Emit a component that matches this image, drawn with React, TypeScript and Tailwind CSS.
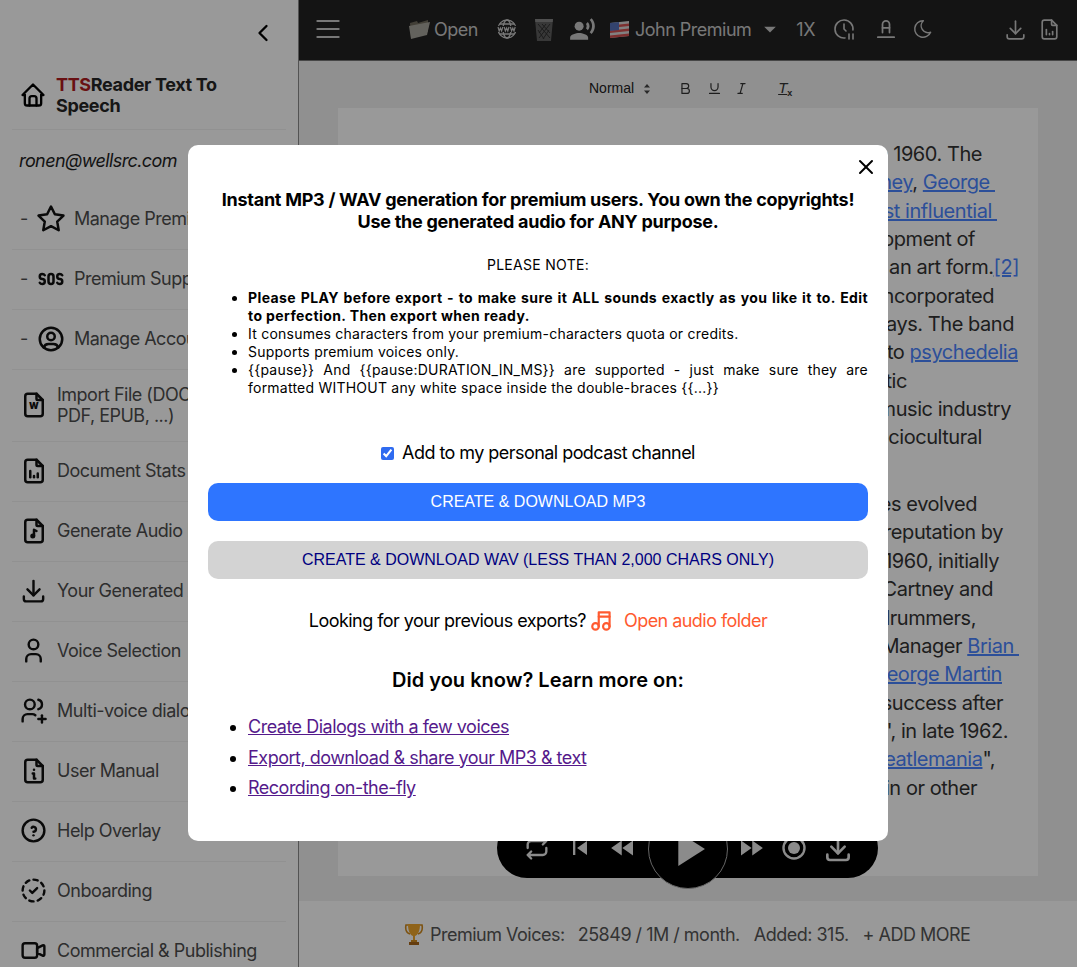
import type { ReactNode } from "react";
import {
  TbChevronLeft, TbHome, TbStar, TbSos, TbUserCircle, TbFileAnalytics, TbFileMusic, TbDownload, TbUser,
  TbUsersPlus, TbFileInfo, TbHelpCircle, TbCircleDashedCheck, TbVideo, TbFile, TbMenu2,
  TbClockPause, TbMoon, TbX, TbMusic, TbRepeat, TbTextColor, TbBold, TbUnderline, TbItalic,
} from "react-icons/tb";
import { MdRecordVoiceOver, MdArrowDropDown, MdSkipPrevious, MdFastRewind, MdFastForward, MdPlayArrow } from "react-icons/md";

const FileWord = () => (
  <span className="relative flex w-[26px] h-[30px] items-center justify-center">
    <TbFile size={30} className="shrink-0" />
    <span className="absolute top-[11px] left-[8px] text-[9px] leading-[10px] font-black tracking-normal">W</span>
  </span>
);

const NAV_ITEMS: { label: string; icon: ReactNode; tall?: boolean }[] = [
  { label: "Import File (DOCX, TXT, PDF, EPUB, ...)", icon: <FileWord />, tall: true },
  { label: "Document Stats", icon: <TbFileAnalytics size={30} className="-ml-[2px]" /> },
  { label: "Generate Audio MP3", icon: <TbFileMusic size={30} className="-ml-[2px]" /> },
  { label: "Your Generated Audio", icon: <TbDownload size={29} className="-ml-[2px]" /> },
  { label: "Voice Selection", icon: <TbUser size={29} className="-ml-[2px]" /> },
  { label: "Multi-voice dialogs", icon: <TbUsersPlus size={29} className="-ml-[2px]" /> },
  { label: "User Manual", icon: <TbFileInfo size={30} className="-ml-[2px]" /> },
  { label: "Help Overlay", icon: <TbHelpCircle size={29} className="-ml-[2px]" /> },
  { label: "Onboarding", icon: <TbCircleDashedCheck size={29} className="-ml-[2px]" /> },
  { label: "Commercial & Publishing", icon: <TbVideo size={29} className="-ml-[2px]" /> },
];

const ACCOUNT_ITEMS: { label: string; icon: ReactNode }[] = [
  { label: "Manage Premium", icon: <TbStar size={30} className="-ml-[1px]" /> },
  { label: "Premium Support", icon: <TbSos size={30} className="-ml-[1px]" /> },
  { label: "Manage Account", icon: <TbUserCircle size={30} className="-ml-[1px]" /> },
];

const Link = ({ children }: { children: ReactNode }) => (
  <span className="text-[#4a84ff] underline">{children}</span>
);

// right edge of each line, measured from the paper, the wrap is the one in the picture
const LINES: { cls: string; text: ReactNode }[] = [
  { cls: "w-[644px]", text: "The Beatles were an English rock band formed in Liverpool in 1960. The" },
  { cls: "w-[657px]", text: <>group, whose best-known line-up comprised John Lennon, <Link>Paul McCartney</Link>, <Link>George&nbsp;</Link></> },
  { cls: "w-[659px]", text: <>Harrison and Ringo Starr, are regarded as <Link>the most influential&nbsp;</Link></> },
  { cls: "w-[637px]", text: "band of all time. They were integral to the development of" },
  { cls: "w-[681px]", text: <>1960s counterculture and popular music's recognition as an art form.<Link>[2]</Link></> },
  { cls: "w-[656px]", text: "Rooted in skiffle, beat and 1950s rock and roll, their sound incorporated" },
  { cls: "w-[676px]", text: "elements of classical music and traditional pop in innovative ways. The band" },
  { cls: "w-[680px]", text: <>also explored music styles ranging from folk and Indian music to <Link>psychedelia</Link></> },
  { cls: "w-[569px]", text: "and hard rock. As pioneers in recording, songwriting and artistic" },
  { cls: "w-[673px]", text: "presentation, the Beatles revolutionised many aspects of the music industry" },
  { cls: "w-[644px]", text: "and were often publicised as leaders of the era's youth and sociocultural" },
  { cls: "w-[400px]", text: "movements." },
  { cls: "w-[639px] mt-[10px]", text: "Led by primary songwriters Lennon and McCartney, the Beatles evolved" },
  { cls: "w-[665px]", text: "from Lennon's previous group, the Quarrymen, and built their reputation by" },
  { cls: "w-[661px]", text: "playing clubs in Liverpool and Hamburg over three years from 1960, initially" },
  { cls: "w-[655px]", text: "with Stuart Sutcliffe playing bass. The core trio of Lennon, McCartney and" },
  { cls: "w-[638px]", text: "Harrison, together since 1958, went through a succession of drummers," },
  { cls: "w-[681px]", text: <>including Pete Best, before asking Starr to join them in 1962. Manager <Link>Brian&nbsp;</Link></> },
  { cls: "w-[664px]", text: <><Link>Epstein</Link> moulded them into a professional act, and producer <Link>George Martin</Link></> },
  { cls: "w-[665px]", text: "guided and developed their recordings, greatly expanding their success after" },
  { cls: "w-[670px]", text: "signing to EMI Records and achieving their first hit, \"Love Me Do\", in late 1962." },
  { cls: "w-[657px]", text: <>As their popularity grew into the intense fan frenzy dubbed "<Link>Beatlemania</Link>",</> },
  { cls: "w-[639px]", text: "the band acquired the nickname the Fab Four, with Epstein, Martin or other" },
];

const FolderIcon = () => (
  <svg width="23" height="22" viewBox="0 0 23 22">
    <path d="M2 5 L9 3 L10 5 L20 2 L20 14 L3 20 Z" fill="#6f6a5c" />
    <path d="M1 8 L22 4 L19 17 L3 21 Z" fill="#a6a49c" />
  </svg>
);

const GlobeWww = () => (
  <svg width="20" height="24" viewBox="0 0 20 24" fill="none" stroke="currentColor" strokeWidth="1.3">
    <circle cx="10" cy="12" r="9" />
    <ellipse cx="10" cy="12" rx="4" ry="9" />
    <path d="M2.5 7 H17.5 M2.5 17 H17.5" />
    <rect x="0" y="9" width="20" height="6" fill="#222" stroke="none" />
    <path d="M1 10 L2.2 14 L3.4 11 L4.6 14 L5.8 10 M7.2 10 L8.4 14 L9.6 11 L10.8 14 L12 10 M13.4 10 L14.6 14 L15.8 11 L17 14 L18.2 10" strokeWidth="1.2" />
  </svg>
);

const TrashIcon = () => (
  <svg width="20" height="25" viewBox="0 0 20 25">
    <path d="M1 2 H19 L17 24 H3 Z" fill="#5e5e5e" />
    <path d="M1 2 H19 L18.7 5 H1.3 Z" fill="#858585" />
    <path d="M4 7 L16 21 M8 7 L16 16 M12 7 L5 16 M16 7 L5 21 M4 13 L10 22 M15 13 L9 22" stroke="#303030" strokeWidth="1" />
  </svg>
);

const FlagIcon = () => (
  <svg width="19" height="19" viewBox="0 0 19 19">
    <path d="M0 3 L19 1 V16 L0 18 Z" fill="#d8d8d8" />
    <path d="M0 5.5 L19 3.5 V6 L0 8 Z M0 10.5 L19 8.5 V11 L0 13 Z M0 15.5 L19 13.5 V16 L0 18 Z" fill="#d05050" />
    <path d="M0 3 L9 2 V10 L0 11 Z" fill="#5570b8" />
  </svg>
);

const TrophyIcon = () => (
  <svg width="20" height="23" viewBox="0 0 20 23">
    <path d="M4 2 H2 C1 7 3 10 6 11 M16 2 H18 C19 7 17 10 14 11" fill="none" stroke="#d08a1e" strokeWidth="1.6" />
    <path d="M4 1 H16 C16 8 14 12 11 13 V17 H9 V13 C6 12 4 8 4 1 Z" fill="#eea62a" />
    <path d="M5 19 H15 V22 H5 Z" fill="#a8661a" />
    <path d="M7 17 H13 V19 H7 Z" fill="#d08a1e" />
  </svg>
);

const RecordIcon = () => (
  <svg width="24" height="24" viewBox="0 0 24 24" fill="none" stroke="currentColor" strokeWidth="2.4">
    <circle cx="12" cy="12" r="10.5" />
    <circle cx="12" cy="12" r="6" fill="currentColor" stroke="none" />
  </svg>
);

const SortArrows = () => (
  <svg width="8" height="12" viewBox="0 0 8 12" fill="#444">
    <path d="M4 1 L7 4.5 H1 Z M4 11 L1 7.5 H7 Z" />
  </svg>
);

function Sidebar() {
  return (
    <aside className="w-[299px] shrink-0 h-full overflow-hidden bg-white border-r border-[#8a8a8a] text-[18px] tracking-[-0.5px] text-[#4d4d4d]">
      <div className="h-[60px] flex items-center justify-end pr-[21px] pt-[6px] text-black">
        <TbChevronLeft size={28} />
      </div>
      <div className="h-[70px] mx-3 border-b border-[#f2f2f2] flex items-center gap-[9px] pl-[7px] text-black">
        <TbHome size={28} className="shrink-0" />
        <span className="font-bold leading-[21px] w-[190px] text-[#262626] tracking-[-0.35px]"><span className="text-[#b01c20]">TTS</span>Reader Text To Speech</span>
      </div>
      <div className="h-[60px] flex items-center pl-[19px] pt-[1px] italic text-[#1f1f1f] tracking-[-0.6px]">ronen@wellsrc.com</div>
      {ACCOUNT_ITEMS.map((item) => (
        <div key={item.label} className="h-[60px] mx-3 border-b border-[#f2f2f2] flex items-center pl-2 pb-[2px]">
          <span className="w-[17px]">-</span>
          <span className="w-[37px] text-[#111]">{item.icon}</span>
          <span className="whitespace-nowrap">{item.label}</span>
        </div>
      ))}
      {NAV_ITEMS.map((item) => (
        <div key={item.label} className={`mx-3 border-b border-[#f2f2f2] flex items-center gap-[10px] pl-[9px] pb-[2px] ${item.tall ? "h-[72px]" : "h-[60px]"}`}>
          <span className="shrink-0 w-[26px] text-[#111]">{item.icon}</span>
          <span className="leading-[21px] w-[230px]">{item.label}</span>
        </div>
      ))}
    </aside>
  );
}

function TopBar() {
  return (
    <header className="h-[61px] shrink-0 bg-[#222] border-b border-[#777] flex items-center pb-[2px] pl-[13px] text-[#c8c8c8] text-[18px] tracking-[-0.5px]">
      <TbMenu2 size={32} strokeWidth={1.5} className="shrink-0" />
      <div className="ml-[64px] flex items-center"><FolderIcon /></div>
      <span className="ml-[3px]">Open</span>
      <span className="ml-[19px]"><GlobeWww /></span>
      <span className="ml-[17px]"><TrashIcon /></span>
      <MdRecordVoiceOver size={27} className="ml-[15px]" />
      <span className="ml-[14px]"><FlagIcon /></span>
      <span className="ml-[6px]">John Premium</span>
      <MdArrowDropDown size={28} className="ml-[5px]" />
      <span className="ml-[12px]">1X</span>
      <TbClockPause size={24} strokeWidth={1.6} className="ml-[17px]" />
      <TbTextColor size={28} strokeWidth={1.5} className="ml-[16px]" />
      <TbMoon size={22} strokeWidth={1.6} className="ml-[12px]" />
      <div className="ml-auto mr-[15px] flex items-center gap-[9px]">
        <TbDownload size={25} strokeWidth={1.6} />
        <TbFileAnalytics size={25} strokeWidth={1.6} />
      </div>
    </header>
  );
}

function EditorToolbar() {
  return (
    <div className="h-[47px] shrink-0 flex items-center pl-[290px] pt-[8px] text-[#333] font-['Liberation_Sans',sans-serif]">
      <span className="text-[14px] text-[#222]">Normal</span>
      <span className="ml-[9px]"><SortArrows /></span>
      <TbBold size={17} strokeWidth={1.7} className="ml-[26px]" />
      <TbUnderline size={17} strokeWidth={1.7} className="ml-[12px]" />
      <TbItalic size={17} strokeWidth={1.7} className="ml-[10px]" />
      <span className="ml-[28px] italic text-[15px] underline">T<sub className="text-[9px] not-italic font-bold">x</sub></span>
    </div>
  );
}

function Paper() {
  return (
    <div className="mx-[39px] h-[768px] shrink-0 bg-white overflow-hidden pt-[32px] text-[20px] leading-[28.35px] tracking-[-0.45px] text-[#333] whitespace-nowrap">
      {LINES.map((line, i) => (
        <div key={i} className={`flex justify-end ${line.cls}`}><span>{line.text}</span></div>
      ))}
    </div>
  );
}

function Player() {
  return (
    <div className="absolute left-[198px] top-[818px] w-[381px] h-[60px] rounded-[30px] bg-black flex items-center text-[#e8e8e8]">
      <TbRepeat size={28} className="ml-[26px] shrink-0" />
      <MdSkipPrevious size={28} className="ml-[15px] shrink-0" />
      <MdFastRewind size={30} className="ml-[14px] shrink-0" />
      <div className="absolute left-[151px] top-[-9px] w-[80px] h-[80px] rounded-full bg-black border border-[#aaa] flex items-center justify-center">
        <MdPlayArrow size={58} />
      </div>
      <MdFastForward size={30} className="ml-[98px] shrink-0" />
      <span className="ml-[16px] shrink-0"><RecordIcon /></span>
      <TbDownload size={32} className="ml-[16px] shrink-0" />
    </div>
  );
}

function StatusBar() {
  return (
    <div className="flex-1 bg-white border-t border-[#f0f0f0] flex items-center pl-[105px] text-[18px] tracking-[-0.5px] text-[#555] whitespace-nowrap">
      <TrophyIcon />
      <span className="ml-[6px]">Premium Voices:</span>
      <span className="ml-[13px]">25849 / 1M / month.</span>
      <span className="ml-[14px]">Added: 315.</span>
      <span className="ml-[14px]">+ ADD MORE</span>
    </div>
  );
}

function ExportModal() {
  return (
    <div className="absolute left-[188px] top-[145px] w-[700px] h-[696px] bg-white rounded-[10px] px-[20px] text-black">
      <TbX size={24} className="absolute right-[10px] top-[10px]" />
      <h2 className="mt-[44px] text-center text-[18px] leading-[21.5px] font-bold tracking-[-0.27px]">
        Instant MP3 / WAV generation for premium users. You own the copyrights!<br />
        Use the generated audio for ANY purpose.
      </h2>
      <p className="mt-[24px] text-center text-[14px] leading-[18px] tracking-[0.3px]">PLEASE NOTE:</p>
      <ul className="mt-[15px] pl-[40px] list-disc text-[14px] leading-[18px] text-justify tracking-[0.23px]">
        <li className="font-bold tracking-[0.4px]">Please PLAY before export - to make sure it ALL sounds exactly as you like it to. Edit to perfection. Then export when ready.</li>
        <li>It consumes characters from your premium-characters quota or credits.</li>
        <li>Supports premium voices only.</li>
        <li>{"{{pause}} And {{pause:DURATION_IN_MS}} are supported - just make sure they are formatted WITHOUT any white space inside the double-braces {{...}}"}</li>
      </ul>
      <label className="mt-[45px] flex items-center justify-center gap-[8px] text-[18px] leading-[22px] tracking-[-0.55px]">
        <input type="checkbox" defaultChecked className="w-[13px] h-[13px] accent-[#2f6bf0]" />
        Add to my personal podcast channel
      </label>
      <button className="mt-[19px] block w-full h-[38px] rounded-[10px] bg-[#2e75ff] text-white text-[16px] font-['Liberation_Sans',sans-serif]">CREATE &amp; DOWNLOAD MP3</button>
      <button className="mt-[20px] block w-full h-[38px] rounded-[10px] bg-[#d3d3d3] text-[#000080] text-[16px] font-['Liberation_Sans',sans-serif]">CREATE &amp; DOWNLOAD WAV (LESS THAN 2,000 CHARS ONLY)</button>
      <div className="mt-[31px] h-[22px] flex items-center justify-center text-[18px] leading-[22px] tracking-[-0.55px]">
        <span>Looking for your previous exports?</span>
        <TbMusic size={26} className="ml-[3px] text-[#ff5a30] shrink-0" />
        <span className="ml-[9px] text-[#ff5a30]">Open audio folder</span>
      </div>
      <h3 className="mt-[36px] text-center text-[20px] leading-[24px] font-semibold">Did you know? Learn more on:</h3>
      <ul className="mt-[20px] pl-[40px] list-disc text-[18px] leading-[30.5px] tracking-[-0.5px] text-[#551a8b] marker:text-black">
        <li><span className="underline">Create Dialogs with a few voices</span></li>
        <li><span className="underline">Export, download &amp; share your MP3 &amp; text</span></li>
        <li><span className="underline">Recording on-the-fly</span></li>
      </ul>
    </div>
  );
}

export default function App() {
  return (
    <div className="relative w-[1077px] h-[967px] overflow-hidden flex bg-white font-['Inter',sans-serif]">
      <Sidebar />
      <main className="relative w-[778px] min-w-0 h-full flex flex-col bg-[#f0f0f0]">
        <TopBar />
        <EditorToolbar />
        <Paper />
        <Player />
        <div className="h-[24px] shrink-0" />
        <StatusBar />
      </main>
      {/* dim layer + dialog */}
      <div className="absolute inset-0 bg-black/40">
        <ExportModal />
      </div>
    </div>
  );
}
